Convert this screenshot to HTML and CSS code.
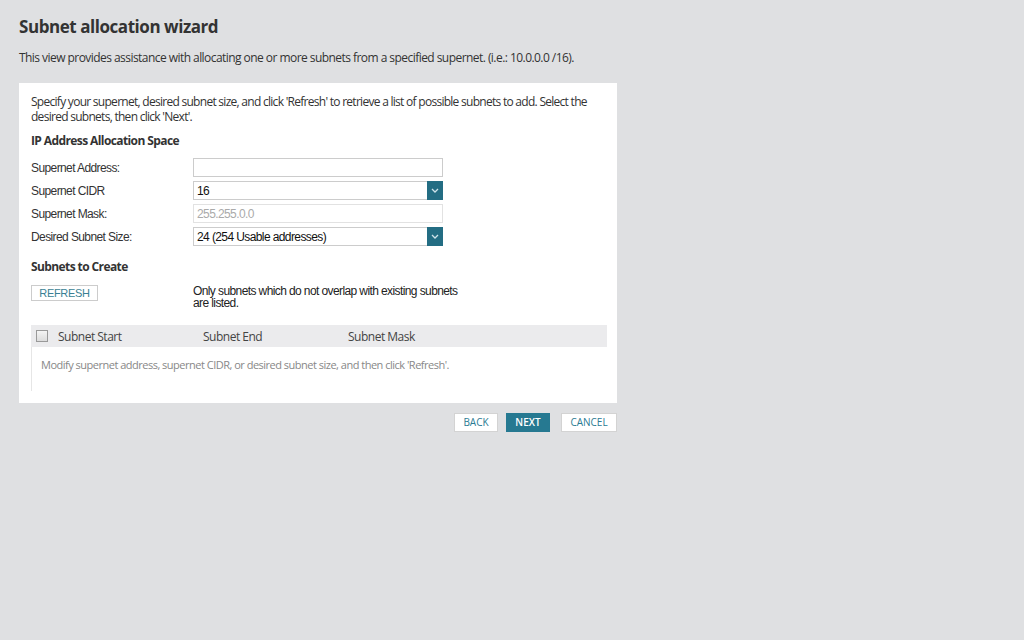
FILE: index.html
```html
<!DOCTYPE html>
<html lang="en">
<head>
    <meta charset="UTF-8">
    <meta name="viewport" content="width=device-width, initial-scale=1.0">
    <title>Subnet allocation wizard</title>
    <link rel="stylesheet" href="styles.css">
</head>
<body>
    <div class="page">
        <h1>Subnet allocation wizard</h1>
        <p class="intro">This view provides assistance with allocating one or more subnets from a specified supernet. (i.e.: 10.0.0.0 /16).</p>

        <div class="panel">
            <p class="help">Specify your supernet, desired subnet size, and click 'Refresh' to retrieve a list of possible subnets to add. Select the desired subnets, then click 'Next'.</p>

            <h2>IP Address Allocation Space</h2>
            <div class="form">
                <label for="supernetAddress">Supernet Address:</label>
                <input id="supernetAddress" class="field" type="text">

                <label for="supernetCidr">Supernet CIDR</label>
                <div class="select">
                    <span>16</span>
                    <span class="arrow">
                        <svg width="8" height="5" viewBox="0 0 8 5"><path d="M1 1l3 3 3-3" fill="none" stroke="#cfe3ea" stroke-width="1.3"/></svg>
                    </span>
                </div>

                <label for="supernetMask">Supernet Mask:</label>
                <input id="supernetMask" class="field" type="text" value="255.255.0.0" disabled>

                <label>Desired Subnet Size:</label>
                <div class="select">
                    <span>24 (254 Usable addresses)</span>
                    <span class="arrow">
                        <svg width="8" height="5" viewBox="0 0 8 5"><path d="M1 1l3 3 3-3" fill="none" stroke="#cfe3ea" stroke-width="1.3"/></svg>
                    </span>
                </div>
            </div>

            <h2 class="create">Subnets to Create</h2>
            <div class="refreshRow">
                <button class="refresh">REFRESH</button>
                <p class="note">Only subnets which do not overlap with existing subnets are listed.</p>
            </div>

            <div class="grid">
                <div class="gridHead">
                    <span class="check"></span>
                    <span class="col">Subnet Start</span>
                    <span class="col">Subnet End</span>
                    <span class="col">Subnet Mask</span>
                </div>
                <div class="gridBody">
                    Modify supernet address, supernet CIDR, or desired subnet size, and then click 'Refresh'.
                </div>
            </div>
        </div>

        <div class="actions">
            <button class="btn back">BACK</button>
            <button class="btn primary">NEXT</button>
            <button class="btn cancel">CANCEL</button>
        </div>
    </div>
</body>
</html>
```

FILE: styles.css
```css
body {
    margin: 0;
    background-color: #dfe0e2;
    color: #333;
    font-family: "Open Sans", Arial, sans-serif;
}

.page {
    width: 598px;
    padding: 14px 0 0 19px;
}

h1 {
    margin: 0;
    font-size: 17px;
    line-height: 26px;
    font-weight: 700;
    letter-spacing: -0.45px;
    color: #333;
}

.intro {
    margin: 10px 0 0;
    font-size: 12px;
    line-height: 16px;
    letter-spacing: -0.55px;
    color: #333;
}

.panel {
    margin-top: 17px;
    background-color: #fff;
    padding: 11px 11px 11px 12px;
    height: 298px;
    box-sizing: content-box;
}

.help {
    margin: 0;
    font-size: 12px;
    line-height: 15px;
    letter-spacing: -0.72px;
    color: #333;
}

h2 {
    margin: 9px 0 0;
    font-size: 12px;
    line-height: 16px;
    font-weight: 700;
    letter-spacing: -0.6px;
    color: #333;
}

.form {
    display: grid;
    grid-template-columns: 162px 250px;
    row-gap: 4px;
    margin-top: 9px;
    font-family: "Liberation Sans", Arial, sans-serif;
    font-size: 12px;
    letter-spacing: -0.6px;
}

.form label {
    display: flex;
    align-items: center;
    height: 19px;
    color: #333;
}

.field {
    box-sizing: border-box;
    height: 19px;
    margin: 0;
    padding: 0 3px;
    border: 1px solid #ccc;
    font-family: "Liberation Sans", Arial, sans-serif;
    font-size: 12px;
    letter-spacing: -0.6px;
    background: #fff;
}

.field:disabled {
    color: #aaa;
    border-color: #e2e2e2;
    background: #fff;
}

.select {
    box-sizing: border-box;
    height: 19px;
    display: flex;
    align-items: center;
    justify-content: space-between;
    border: 1px solid #ccc;
    padding-left: 3px;
    color: #111;
}

.arrow {
    width: 16px;
    height: 19px;
    margin-right: -1px;
    background-color: #236d83;
    display: flex;
    align-items: center;
    justify-content: center;
}

.create {
    margin-top: 13px;
}

.refreshRow {
    display: flex;
    margin-top: 10px;
}

.refresh {
    width: 67px;
    height: 16px;
    margin: 0 95px 0 0;
    padding: 0;
    border: 1px solid #ccc;
    background: #fff;
    color: #3a7f94;
    font-family: "Liberation Sans", Arial, sans-serif;
    font-size: 11px;
    line-height: 14px;
    letter-spacing: -0.3px;
}

.note {
    margin: 0;
    width: 275px;
    font-family: "Liberation Sans", Arial, sans-serif;
    font-size: 12px;
    line-height: 12px;
    letter-spacing: -0.6px;
    color: #222;
}

.grid {
    margin-top: 16px;
    margin-right: -1px;
}

.gridHead {
    display: flex;
    align-items: center;
    height: 22px;
    background-color: #ebebed;
    font-size: 12px;
    letter-spacing: -0.5px;
    color: #444;
}

.check {
    width: 10px;
    height: 10px;
    margin: 0 10px 0 5px;
    border: 1px solid #999;
    background: linear-gradient(#f4f4f4, #dcdcdc);
}

.col {
    width: 145px;
}

.gridBody {
    height: 44px;
    border-left: 1px solid #e6e6e6;
    padding: 10px 0 0 9px;
    box-sizing: border-box;
    font-size: 11px;
    letter-spacing: -0.5px;
    color: #888;
}

.actions {
    display: flex;
    justify-content: flex-end;
    gap: 8px;
    margin-top: 10px;
}

.btn {
    width: 44px;
    height: 19px;
    padding: 0;
    border: 1px solid #d3d3d3;
    background: #fff;
    color: #2a7b93;
    font-family: "Open Sans", Arial, sans-serif;
    font-size: 10px;
    line-height: 17px;
}

.btn.primary {
    background-color: #267991;
    border-color: #267991;
    color: #fff;
    font-weight: 600;
}

.btn.cancel {
    width: 56px;
    margin-left: 3px;
}
```
